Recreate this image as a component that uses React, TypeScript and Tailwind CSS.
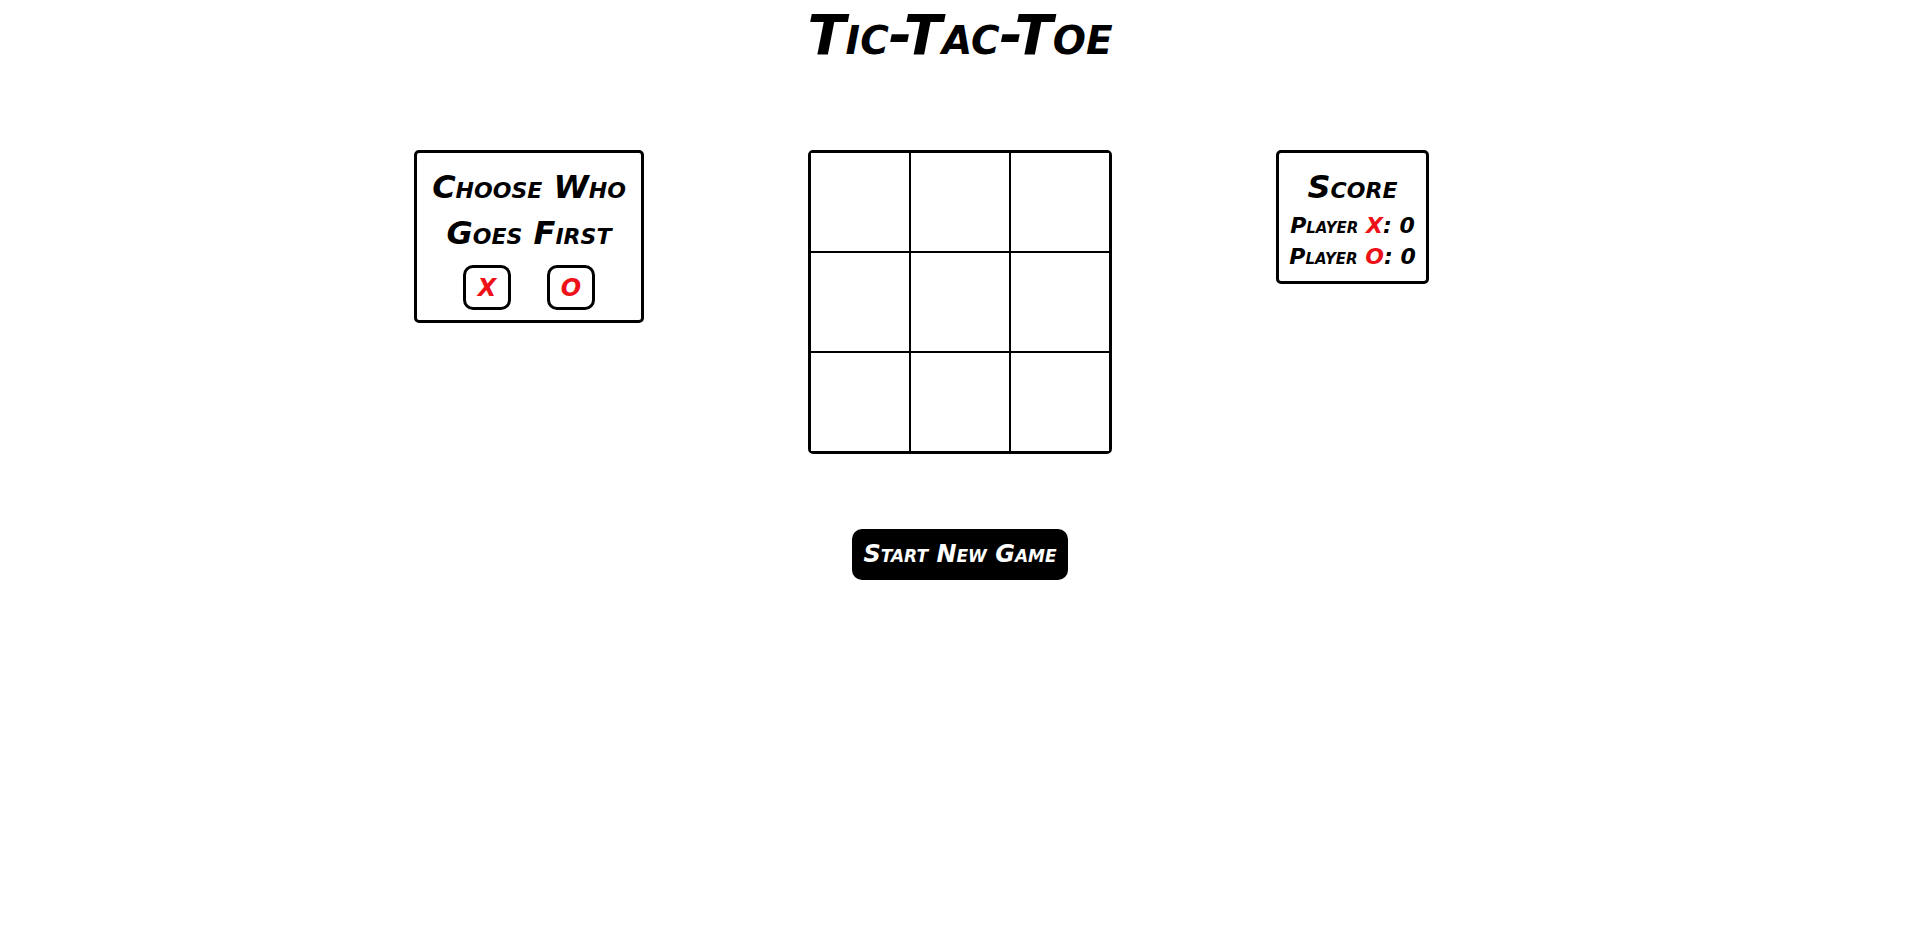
import { useState } from "react";

type Player = "X" | "O";

const LINES = [
  [0, 1, 2],
  [3, 4, 5],
  [6, 7, 8],
  [0, 3, 6],
  [1, 4, 7],
  [2, 5, 8],
  [0, 4, 8],
  [2, 4, 6],
];

const EMPTY: (Player | null)[] = Array(9).fill(null);

function hasWon(cells: (Player | null)[], player: Player) {
  return LINES.some((line) => line.every((i) => cells[i] === player));
}

function ScoreLine({ player, score }: { player: Player; score: number }) {
  return (
    <p className="text-[22px] leading-[31px] font-bold whitespace-nowrap">
      Player <span className="text-[#ee1118]">{player}</span>: {score}
    </p>
  );
}

export default function App() {
  const [cells, setCells] = useState(EMPTY);
  const [turn, setTurn] = useState<Player | null>(null);
  const [scores, setScores] = useState({ X: 0, O: 0 });

  const play = (index: number) => {
    if (!turn || cells[index]) return;
    const next = cells.map((cell, i) => (i === index ? turn : cell));
    setCells(next);
    if (hasWon(next, turn)) {
      setScores({ ...scores, [turn]: scores[turn] + 1 });
      setTurn(null);
    } else {
      setTurn(turn === "X" ? "O" : "X");
    }
  };

  const reset = () => {
    setCells(EMPTY);
    setTurn(null);
  };

  return (
    <div className="flex flex-col items-center bg-white pb-8 font-['DejaVu_Sans',sans-serif] text-black italic [font-variant-caps:small-caps]">
      <h1 className="text-[56px] leading-[70px] font-bold">Tic-Tac-Toe</h1>

      <main className="mt-20 grid w-full grid-cols-[1fr_auto_1fr] items-start gap-x-[164px]">
        <section className="flex w-[230px] flex-col items-center justify-self-end rounded-[5px] border-3 border-black px-2 pt-[11px] pb-[10px]">
          <h2 className="text-center text-[32px] leading-[46px] font-bold">
            <span className="block whitespace-nowrap">Choose Who</span>{" "}
            <span className="block whitespace-nowrap">Goes First</span>
          </h2>
          <div className="mt-[9px] flex gap-9">
            {(["X", "O"] as Player[]).map((player) => (
              <button
                key={player}
                type="button"
                onClick={() => setTurn(player)}
                className="h-[45px] w-12 rounded-[10px] border-3 border-black text-[24px] leading-none font-bold text-[#ee1118] italic"
              >
                {player}
              </button>
            ))}
          </div>
        </section>

        <div className="grid grid-cols-[repeat(3,98px)] grid-rows-[repeat(3,98px)] gap-[2px] rounded-[5px] border-3 border-black bg-black">
          {cells.map((cell, i) => (
            <button
              key={i}
              type="button"
              aria-label={`Square ${i + 1}`}
              onClick={() => play(i)}
              className="bg-white text-[64px] leading-none font-bold italic"
            >
              {cell}
            </button>
          ))}
        </div>

        <section className="flex w-[153px] flex-col items-center justify-self-start rounded-[5px] border-3 border-black pt-[11px] pb-[9px]">
          <h2 className="text-[32px] leading-[46px] font-bold">Score</h2>
          <ScoreLine player="X" score={scores.X} />
          <ScoreLine player="O" score={scores.O} />
        </section>
      </main>

      <button
        type="button"
        onClick={reset}
        className="mt-[75px] h-[51px] w-[216px] rounded-[10px] bg-black text-[24px] leading-[31px] font-bold whitespace-nowrap text-white italic [font-variant-caps:small-caps]"
      >
        Start New Game
      </button>
    </div>
  );
}
